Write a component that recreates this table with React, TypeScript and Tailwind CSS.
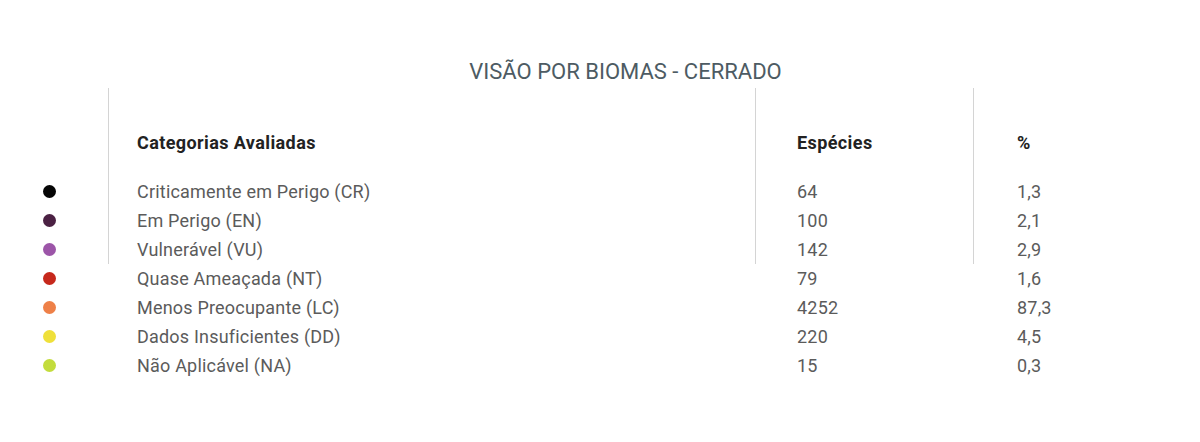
import React from "react";

const rows = [
  { color: "bg-[#050505]", label: "Criticamente em Perigo (CR)", n: "64", pct: "1,3" },
  { color: "bg-[#4b2143]", label: "Em Perigo (EN)", n: "100", pct: "2,1" },
  { color: "bg-[#9c55a8]", label: "Vulnerável (VU)", n: "142", pct: "2,9" },
  { color: "bg-[#c6281c]", label: "Quase Ameaçada (NT)", n: "79", pct: "1,6" },
  { color: "bg-[#ee8048]", label: "Menos Preocupante (LC)", n: "4252", pct: "87,3" },
  { color: "bg-[#efe03a]", label: "Dados Insuficientes (DD)", n: "220", pct: "4,5" },
  { color: "bg-[#c3dc3c]", label: "Não Aplicável (NA)", n: "15", pct: "0,3" },
];

export default function App() {
  return (
    <div className="w-[1200px] h-[442px] bg-white font-['Roboto',sans-serif]">
      <div className="pt-[59px] pl-[51px] text-center">
        <h1 className="text-[22px] leading-[26px] text-[#4d5b63] font-normal">VISÃO POR BIOMAS - CERRADO</h1>
      </div>
      <div className="mt-[3px] grid grid-cols-[108px_647px_218px_227px]">
        {/* header */}
        <div className="h-[89px]" />
        <div className="h-[89px] border-l border-[#d4d4d4] pl-[28px] pt-[40px] text-[18px] leading-[30px] tracking-[0.4px] font-bold text-[#222]">
          Categorias Avaliadas
        </div>
        <div className="h-[89px] border-l border-[#d4d4d4] pl-[41px] pt-[40px] text-[18px] leading-[30px] tracking-[0.4px] font-bold text-[#222]">
          Espécies
        </div>
        <div className="h-[89px] border-l border-[#d4d4d4] pl-[43px] pt-[40px] text-[18px] leading-[30px] font-bold text-[#222]">
          %
        </div>
        {rows.map((r, i) => {
          const line = i < 3 ? "border-l border-[#d4d4d4]" : "border-l border-transparent";
          return (
            <React.Fragment key={r.label}>
              <div className="h-[29px] flex items-center pl-[43px]">
                <span className={`w-[13px] h-[13px] rounded-full ${r.color}`} />
              </div>
              <div className={`h-[29px] ${line} pl-[28px] text-[18px] leading-[29px] tracking-[0.2px] text-[#5b5b5b]`}>{r.label}</div>
              <div className={`h-[29px] ${line} pl-[41px] text-[18px] leading-[29px] tracking-[0.2px] text-[#5b5b5b]`}>{r.n}</div>
              <div className={`h-[29px] ${line} pl-[43px] text-[18px] leading-[29px] tracking-[0.2px] text-[#5b5b5b]`}>{r.pct}</div>
            </React.Fragment>
          );
        })}
      </div>
    </div>
  );
}
